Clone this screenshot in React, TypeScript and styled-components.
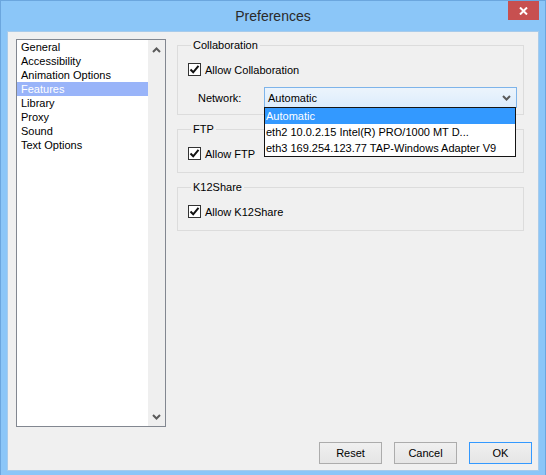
import React from "react";
import styled, { createGlobalStyle } from "styled-components";

const GlobalStyle = createGlobalStyle`
    html, body {
        margin: 0;
        padding: 0;
        background: #ffffff;
    }
    body {
        font-family: "Liberation Sans", Arial, sans-serif;
        font-size: 11px;
        color: #000;
    }
    * {
        box-sizing: border-box;
    }
`;

const categories = [
    "General",
    "Accessibility",
    "Animation Options",
    "Features",
    "Library",
    "Proxy",
    "Sound",
    "Text Options",
];

const networks = [
    "Automatic",
    "eth2 10.0.2.15 Intel(R) PRO/1000 MT D...",
    "eth3 169.254.123.77 TAP-Windows Adapter V9",
];

const Chevron = ({ up = false }: { up?: boolean }) => (
    <svg width="9" height="6" viewBox="0 0 9 6">
        <path
            d={up ? "M1 5 L4.5 1.5 L8 5" : "M1 1 L4.5 4.5 L8 1"}
            fill="none"
            stroke="#5a5a5a"
            strokeWidth="2"
        />
    </svg>
);

const Check = () => (
    <svg width="11" height="11" viewBox="0 0 11 11">
        <path
            d="M1.5 5.5 L4.2 8.3 L9.5 1.8"
            fill="none"
            stroke="#111"
            strokeWidth="2"
        />
    </svg>
);

const CheckBox = ({ label }: { label: string }) => (
    <CheckRow>
        <Box>
            <Check />
        </Box>
        <span>{label}</span>
    </CheckRow>
);

const App = () => {
    const selected = "Features";

    return (
        <>
            <GlobalStyle />
            <Window>
                <TitleBar>
                    <span />
                    <Title>Preferences</Title>
                    <CloseButton>
                        <svg width="9" height="8" viewBox="0 0 9 8">
                            <path
                                d="M1 0.5 L8 7.5 M8 0.5 L1 7.5"
                                stroke="#fff"
                                strokeWidth="2"
                            />
                        </svg>
                    </CloseButton>
                </TitleBar>
                <Client>
                    <Main>
                        <ListBox>
                            <Items>
                                {categories.map(c => (
                                    <Item key={c} $active={c === selected}>
                                        {c}
                                    </Item>
                                ))}
                            </Items>
                            <ScrollBar>
                                <Chevron up />
                                <Chevron />
                            </ScrollBar>
                        </ListBox>
                        <Panel>
                            <Group>
                                <Legend>Collaboration</Legend>
                                <CheckBox label="Allow Collaboration" />
                                <NetworkRow>
                                    <NetworkLabel>Network:</NetworkLabel>
                                    <Combo>
                                        <ComboText>Automatic</ComboText>
                                        <Chevron />
                                        <DropList>
                                            {networks.map((n, i) => (
                                                <DropItem key={n} $active={i === 0}>
                                                    {n}
                                                </DropItem>
                                            ))}
                                        </DropList>
                                    </Combo>
                                </NetworkRow>
                            </Group>
                            <Group>
                                <Legend>FTP</Legend>
                                <CheckBox label="Allow FTP" />
                            </Group>
                            <Group>
                                <Legend>K12Share</Legend>
                                <CheckBox label="Allow K12Share" />
                            </Group>
                        </Panel>
                    </Main>
                    <Footer>
                        <Button>Reset</Button>
                        <Button>Cancel</Button>
                        <Button $default>OK</Button>
                    </Footer>
                </Client>
            </Window>
        </>
    );
};

const Window = styled.div`
    width: 546px;
    height: 475px;
    background: #8bc6f8;
    border: 1px solid #6ba6de;
    border-bottom: none;
    padding: 0 6px 3px;
    display: flex;
    flex-direction: column;
`;

const TitleBar = styled.div`
    height: 30px;
    display: grid;
    grid-template-columns: 1fr auto 1fr;
    align-items: start;
`;

const Title = styled.div`
    font-size: 14px;
    color: #2a2a2a;
    line-height: 30px;
`;

const CloseButton = styled.div`
    justify-self: end;
    width: 31px;
    height: 19px;
    background: #c75050;
    display: flex;
    align-items: center;
    justify-content: center;
`;

const Client = styled.div`
    height: 440px;
    background: #f0f0f0;
    border: 1px solid #a7cbeb;
    padding: 7px 6px 6px 8px;
    display: flex;
    flex-direction: column;
`;

const Main = styled.div`
    flex: 1;
    display: flex;
    align-items: flex-start;
    gap: 11px;
`;

const ListBox = styled.div`
    width: 150px;
    height: 388px;
    background: #fff;
    border: 1px solid #828790;
    display: flex;
`;

const Items = styled.div`
    flex: 1;
`;

const Item = styled.div<{ $active?: boolean }>`
    height: 14px;
    line-height: 14px;
    padding-left: 4px;
    background: ${props => (props.$active ? "#99b4f9" : "transparent")};
    color: ${props => (props.$active ? "#fff" : "#000")};
`;

const ScrollBar = styled.div`
    width: 17px;
    background: #efefef;
    display: flex;
    flex-direction: column;
    justify-content: space-between;
    align-items: center;
    padding: 7px 0 6px;
`;

const Panel = styled.div`
    flex: 1;
    margin-right: 8px;
    margin-top: -1px;
    display: flex;
    flex-direction: column;
    gap: 7px;
`;

const Group = styled.fieldset`
    margin: 0;
    border: 1px solid #dcdcdc;
    padding: 10px 10px 6px;
    min-width: 0;
`;

const Legend = styled.legend`
    padding: 0 2px;
    margin-left: 3px;
    line-height: 14px;
    color: #000;
`;

const CheckRow = styled.div`
    display: flex;
    align-items: center;
    gap: 4px;
    height: 13px;
    margin: 1px 0 6px;
`;

const Box = styled.div`
    width: 13px;
    height: 13px;
    border: 1px solid #333;
    background: #fff;
    display: flex;
    align-items: center;
    justify-content: center;
`;

const NetworkRow = styled.div`
    display: flex;
    align-items: center;
    margin-top: 11px;
    padding-left: 10px;
`;

const NetworkLabel = styled.span`
    width: 66px;
`;

const Combo = styled.div`
    position: relative;
    flex: 1;
    height: 21px;
    margin-right: -4px;
    border: 1px solid #7eb4ea;
    background: linear-gradient(#ecf4fc, #dcecfc);
    display: flex;
    align-items: center;
    justify-content: space-between;
    padding: 0 5px 0 3px;
`;

const ComboText = styled.span``;

const DropList = styled.div`
    position: absolute;
    top: 19px;
    left: -1px;
    right: 0;
    z-index: 5;
    background: #fff;
    border: 1px solid #141414;
`;

const DropItem = styled.div<{ $active?: boolean }>`
    height: 16px;
    line-height: 16px;
    padding-left: 1px;
    white-space: nowrap;
    background: ${props => (props.$active ? "#3399ff" : "#fff")};
    color: ${props => (props.$active ? "#fff" : "#000")};
`;

const Footer = styled.div`
    display: flex;
    justify-content: flex-end;
    gap: 12px;
`;

const Button = styled.button<{ $default?: boolean }>`
    width: 63px;
    height: 22px;
    font-family: inherit;
    font-size: 11px;
    color: #000;
    background: linear-gradient(#f0f0f0, #e5e5e5);
    border: 1px solid ${props => (props.$default ? "#3399ff" : "#acacac")};
    padding: 0;
`;

export default App;
